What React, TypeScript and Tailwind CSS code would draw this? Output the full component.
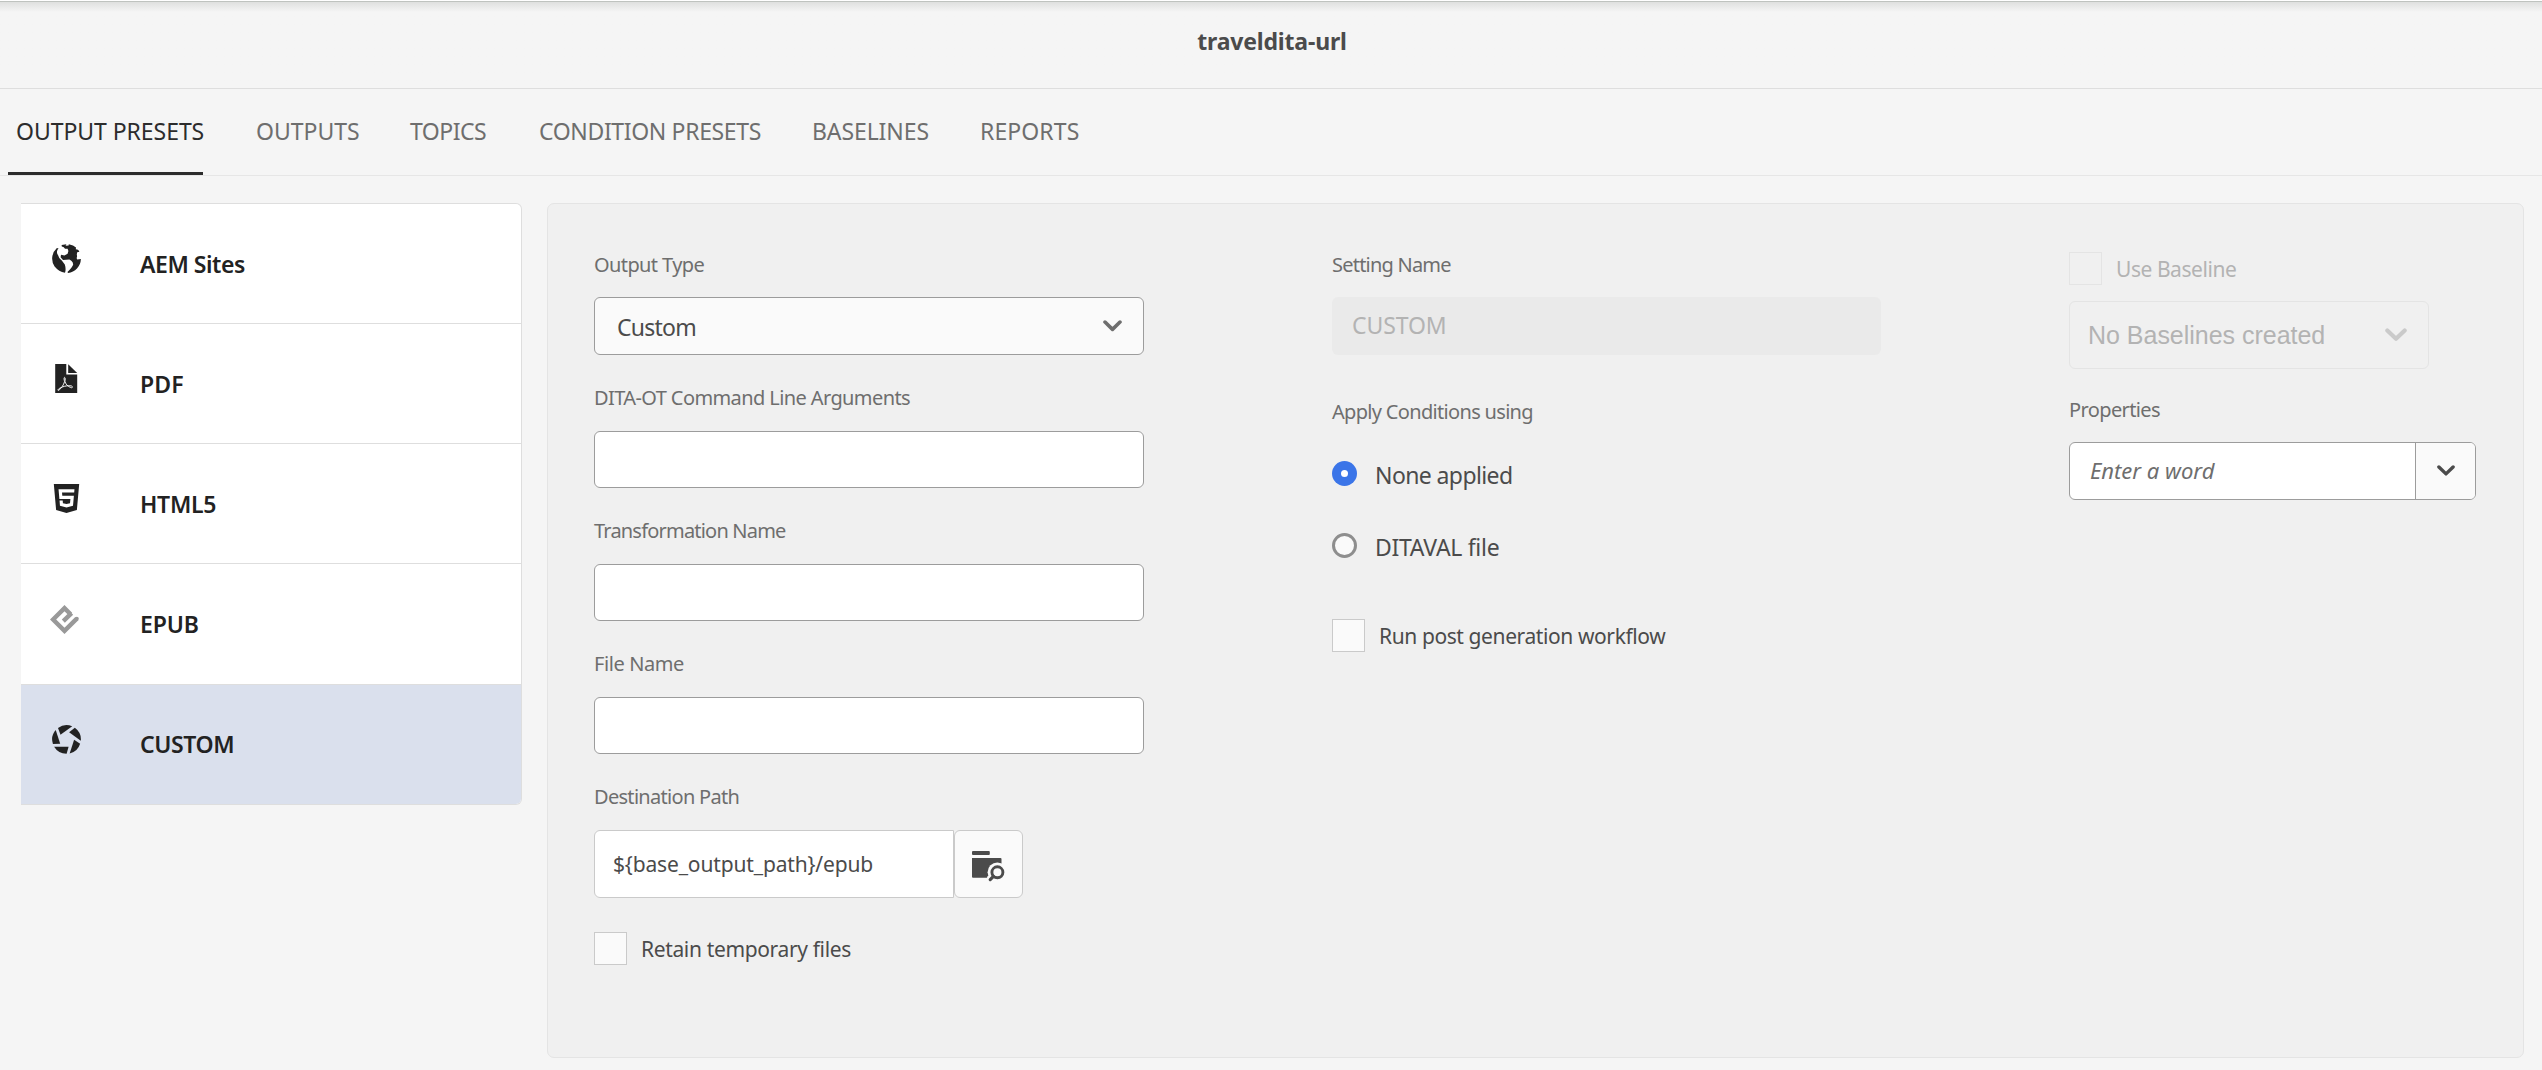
import type { ReactNode } from "react";

function GlobeIcon() {
  return (
    <svg width="29" height="29" viewBox="0 0 29 29" fill="#222222">
      <path d="M4.9 3.9A14.4 14.4 0 0 0 2.6 22.6Q6.8 27.8 13 28.8C13.9 26.6 13.7 23 12.8 20.4L9.8 16.4Q6.4 13.6 6.1 11.2Q4.7 9.6 5 7.6Q5.2 5.8 6.6 4.6Z" />
      <path d="M9.6 .9L14.4.2L13.6 1.8L16.6 1.6L16.8.2Q21.6 1 24 3.6L23.8 5.2L26 5.8Q27 7 27.4 7.8L25.2 8.2L24.8 10.4Q25.4 12.6 24.6 14L25.2 15.4L28.9 15Q28.7 20.5 25 24.5Q21.4 28.3 16 28.9L15.5 28Q20.4 23.4 21.2 20.6L20.6 18.2Q19.6 16.6 17.4 15.6L11 16L8.6 13.2L9 10.8L12.4 11.6L15.6 9.8L16.4 7L15.6 4.8L13 4.8L11.8 3.2L9.8 2.6Z" />
    </svg>
  );
}

function PdfIcon() {
  return (
    <svg width="29" height="29" viewBox="0 0 29 29">
      <path d="M3.2 0H14.3V10.4H25.2V29H3.2Z" fill="#222222" />
      <path d="M16.2 0.3L25.2 9H16.2Z" fill="#222222" />
      <path
        d="M12.6 13.4C11.6 13.4 12.2 16.2 12.6 17.5C11.5 21.2 9.4 24.2 7.2 25.9C6.2 26.9 5.2 26.2 6.6 25C9.5 22.8 15.3 21 19.6 22C21.3 22.8 20.2 24.3 18.6 23.5C15.4 22.3 13.6 19.8 12.9 17.4C13.3 15.9 13.4 13.4 12.6 13.4Z"
        fill="none"
        stroke="#ffffff"
        strokeWidth="0.95"
      />
    </svg>
  );
}

function HtmlIcon() {
  return (
    <svg width="29" height="29" viewBox="0 0 24 24" fill="#222222">
      <path d="M1.5 0h21l-1.91 21.563L11.977 24l-8.564-2.438L1.5 0zm7.031 9.75l-.232-2.718 10.059.003.23-2.622L5.412 4.41l.698 8.01h9.126l-.326 3.426-2.91.804-2.955-.81-.188-2.11H6.248l.33 4.171L12 19.351l5.379-1.443.744-8.157H8.531z" />
    </svg>
  );
}

function EpubIcon() {
  return (
    <svg width="29" height="29" viewBox="0 0 29 29" className="mt-px -ml-[2px]" fill="none" stroke="#999999" strokeWidth="4.4">
      <path d="M20.6 9.2L14.5 3.1L3.1 14.5L14.5 25.9L26.8 13.6" />
      <path d="M21.6 8.2L13.3 16.1" />
      <circle cx="26.8" cy="13.7" r="2" fill="#999999" stroke="none" />
    </svg>
  );
}

function ShutterIcon() {
  return (
    <svg width="29" height="29" viewBox="0 0 29 29" fill="#222222">
      {[0, 72, 144, 216, 288].map((angle) => (
        <path key={angle} d="M6 3A14.4 14.4 0 0 1 20.2 1.3L8.5 9.8Z" transform={`rotate(${angle} 14.5 14.5)`} />
      ))}
    </svg>
  );
}

function BrowseIcon() {
  return (
    <svg width="34" height="32" viewBox="0 0 34 32" fill="#4b4b4b">
      <rect x="0" y="0" width="17.8" height="4" rx="1" />
      <path d="M0 7H28.5Q29.5 7 29.5 8V26.7H1Q0 26.7 0 25.7Z" />
      <circle cx="25.4" cy="21.3" r="9.8" fill="#fafafa" />
      <path d="M15.6 25H19V32H13Z" fill="#fafafa" />
      <circle cx="25.4" cy="21.3" r="5.5" fill="none" stroke="#4b4b4b" strokeWidth="2.9" />
      <path d="M21.4 25.3L18.2 28.6" stroke="#4b4b4b" strokeWidth="3.2" strokeLinecap="round" />
    </svg>
  );
}

function Chevron({ width, className }: { width: number; className: string }) {
  return (
    <svg width={width} height={width * 0.62} viewBox="0 0 18 11" fill="none" stroke="currentColor" strokeWidth="3.4" strokeLinecap="round" strokeLinejoin="round" className={className}>
      <path d="M1.9 1.9L9 8.8L16.1 1.9" />
    </svg>
  );
}

const tabs = [
  { label: "OUTPUT PRESETS", style: "w-[240px] tracking-[-0.05px] text-[#2c2c2c]" },
  { label: "OUTPUTS", style: "w-[154px]" },
  { label: "TOPICS", style: "w-[129px] tracking-[-0.5px]" },
  { label: "CONDITION PRESETS", style: "w-[273px] tracking-[-0.35px]" },
  { label: "BASELINES", style: "w-[168px] tracking-[-0.1px]" },
  { label: "REPORTS", style: "w-[100px] tracking-[0.1px]" },
];

const presets = [
  { label: "AEM Sites", icon: <GlobeIcon />, style: "tracking-[-0.45px]" },
  { label: "PDF", icon: <PdfIcon />, style: "tracking-[0.1px]" },
  { label: "HTML5", icon: <HtmlIcon />, style: "tracking-[-0.3px]" },
  { label: "EPUB", icon: <EpubIcon />, style: "tracking-[-0.1px]" },
  { label: "CUSTOM", icon: <ShutterIcon />, style: "tracking-[-0.4px]" },
];

function Label({ children, className = "" }: { children: ReactNode; className?: string }) {
  return <div className={`h-[50px] pt-px text-[20px] leading-[32px] whitespace-nowrap text-[#6e6e6e] ${className}`}>{children}</div>;
}

function TextField({ label, className }: { label: string; className: string }) {
  return (
    <div className="mb-[26px]">
      <Label className={className}>{label}</Label>
      <div className="h-[57px] rounded-[6px] border border-[#9c9c9c] bg-white" />
    </div>
  );
}

function Checkbox({ label, className = "", disabled = false }: { label: string; className?: string; disabled?: boolean }) {
  return (
    <div className={`flex h-[33px] items-center gap-[14px] ${disabled ? "text-[#b3b3b3]" : "text-[#4b4b4b]"}`}>
      <div className={`size-[33px] border ${disabled ? "border-[#e4e4e4] bg-[#f0f0f0]" : "border-[#cacaca] bg-[#fafafa]"}`} />
      <div className={`pt-[2px] text-[21px] leading-[33px] whitespace-nowrap ${className}`}>{label}</div>
    </div>
  );
}

function Radio({ label, checked, className }: { label: string; checked?: boolean; className: string }) {
  return (
    <div className="flex h-[25px] items-center gap-[18px]">
      {checked ? (
        <div className="flex size-[25px] items-center justify-center rounded-full bg-[#3b75e8]">
          <div className="size-[7px] rounded-full bg-white" />
        </div>
      ) : (
        <div className="size-[25px] rounded-full border-3 border-[#8e8e8e] bg-[#fafafa]" />
      )}
      <div className={`pt-[3px] text-[23px] leading-[25px] whitespace-nowrap text-[#4b4b4b] ${className}`}>{label}</div>
    </div>
  );
}

export default function App() {
  return (
    <div className="flex h-[1070px] w-[2542px] flex-col overflow-hidden bg-[#f5f5f5] font-['Noto_Sans',sans-serif]">
      <div className="h-px bg-white" />
      <div className="h-px bg-[#bfc3bf]" />
      <header className="flex h-[87px] justify-center border-b border-[#dedede] bg-linear-to-b from-[#dfe0df] to-[#f5f5f5] to-[10px] pl-[2px]">
        <h1 className="pt-[20px] text-[23px] leading-[38px] font-bold tracking-[-0.18px] text-[#4b4b4b]">traveldita-url</h1>
      </header>

      <nav className="flex h-[87px] border-b border-[#e6e6e6] pl-[8px] text-[23px] leading-[36px] text-[#6e6e6e]">
        {tabs.map((tab, i) => (
          <div key={tab.label} className={`flex flex-col whitespace-nowrap ${tab.style}`}>
            <div className="h-[83px] pt-[24px] pl-[8px]">{tab.label}</div>
            {i === 0 && <div className="h-[3px] w-[195px] bg-[#2c2c2c]" />}
          </div>
        ))}
      </nav>

      <main className="flex gap-[25px] pt-[27px] pl-[21px]">
        <aside className="flex h-[602px] w-[501px] flex-col overflow-hidden rounded-r-[6px] border-t border-r border-b border-[#dedede] bg-white">
          {presets.map((preset, i) => (
            <div key={preset.label} className={`flex shrink-0 pl-[31px] ${i === 4 ? "h-[120px] bg-[#dae0ed]" : i === 3 ? "h-[121px] border-b border-[#dedede]" : "h-[120px] border-b border-[#dedede]"}`}>
              <div className="w-[88px] pt-[40px]">{preset.icon}</div>
              <div className={`text-[23px] leading-[38px] font-semibold text-[#222222] ${i === 4 ? "pt-[40px]" : "pt-[41px]"} ${preset.style}`}>{preset.label}</div>
            </div>
          ))}
        </aside>

        <section className="flex h-[855px] w-[1977px] gap-[188px] rounded-[7px] border border-[#e4e4e4] bg-[#f0f0f0] pt-[44px] pl-[46px]">
          <div className="w-[550px]">
            <div className="mb-[26px]">
              <Label className="-mb-px tracking-[-0.6px]">Output Type</Label>
              <div className="flex h-[58px] items-center justify-between rounded-[6px] border border-[#9c9c9c] bg-[#fafafa] pr-[21px] pl-[22px]">
                <span className="pt-[2px] text-[23px] tracking-[-0.75px] text-[#4b4b4b]">Custom</span>
                <Chevron width={19} className="text-[#6e6e6e]" />
              </div>
            </div>
            <TextField label="DITA-OT Command Line Arguments" className="tracking-[-0.6px]" />
            <TextField label="Transformation Name" className="tracking-[-0.8px]" />
            <TextField label="File Name" className="tracking-[-0.4px]" />
            <Label className="tracking-[-0.7px]">Destination Path</Label>
            <div className="mb-[34px] flex h-[68px]">
              <div className="flex w-[360px] items-center rounded-l-[6px] border border-[#cacaca] bg-white pt-[2px] pl-[18px] text-[21px] tracking-[-0.15px] text-[#4b4b4b]">
                {"${base_output_path}/epub"}
              </div>
              <div className="flex w-[69px] justify-center rounded-[6px] border border-[#cacaca] bg-[#fafafa] pt-[20px]">
                <BrowseIcon />
              </div>
            </div>
            <Checkbox label="Retain temporary files" className="tracking-[-0.35px]" />
          </div>

          <div className="w-[549px]">
            <Label className="-mb-px tracking-[-0.78px]">Setting Name</Label>
            <div className="mb-[40px] flex h-[58px] items-center rounded-[6px] bg-[#eaeaea] pb-[2px] pl-[20px] text-[23px] tracking-[-0.1px] text-[#b3b3b3]">CUSTOM</div>
            <Label className="mb-[16px] tracking-[-0.68px]">Apply Conditions using</Label>
            <div className="mb-[61px] flex flex-col gap-[47px]">
              <Radio label="None applied" checked className="tracking-[-0.6px]" />
              <Radio label="DITAVAL file" className="tracking-[-0.3px]" />
            </div>
            <Checkbox label="Run post generation workflow" className="tracking-[-0.4px]" />
          </div>

          <div className="w-[407px] pt-[4px]">
            <Checkbox label="Use Baseline" disabled className="tracking-[-0.45px]" />
            <div className="mt-[16px] mb-[24px] flex h-[68px] w-[360px] items-center justify-between rounded-[6px] border border-[#e4e4e4] pr-[21px] pl-[18px] text-[#b3b3b3]">
              <span className="pt-px font-['Liberation_Sans',sans-serif] text-[25px] tracking-[-0.02px]">No Baselines created</span>
              <Chevron width={22} className="text-[#cacaca]" />
            </div>
            <Label className="-mb-px tracking-[-0.62px]">Properties</Label>
            <div className="flex h-[58px] overflow-hidden rounded-[6px] border border-[#9c9c9c] bg-white">
              <div className="flex w-[346px] items-center border-r border-[#9c9c9c] pb-px pl-[20px] text-[22px] text-[#6e6e6e] italic">Enter a word</div>
              <div className="flex grow items-center justify-center bg-[#fafafa]">
                <Chevron width={18} className="text-[#4b4b4b]" />
              </div>
            </div>
          </div>
        </section>
      </main>
    </div>
  );
}
